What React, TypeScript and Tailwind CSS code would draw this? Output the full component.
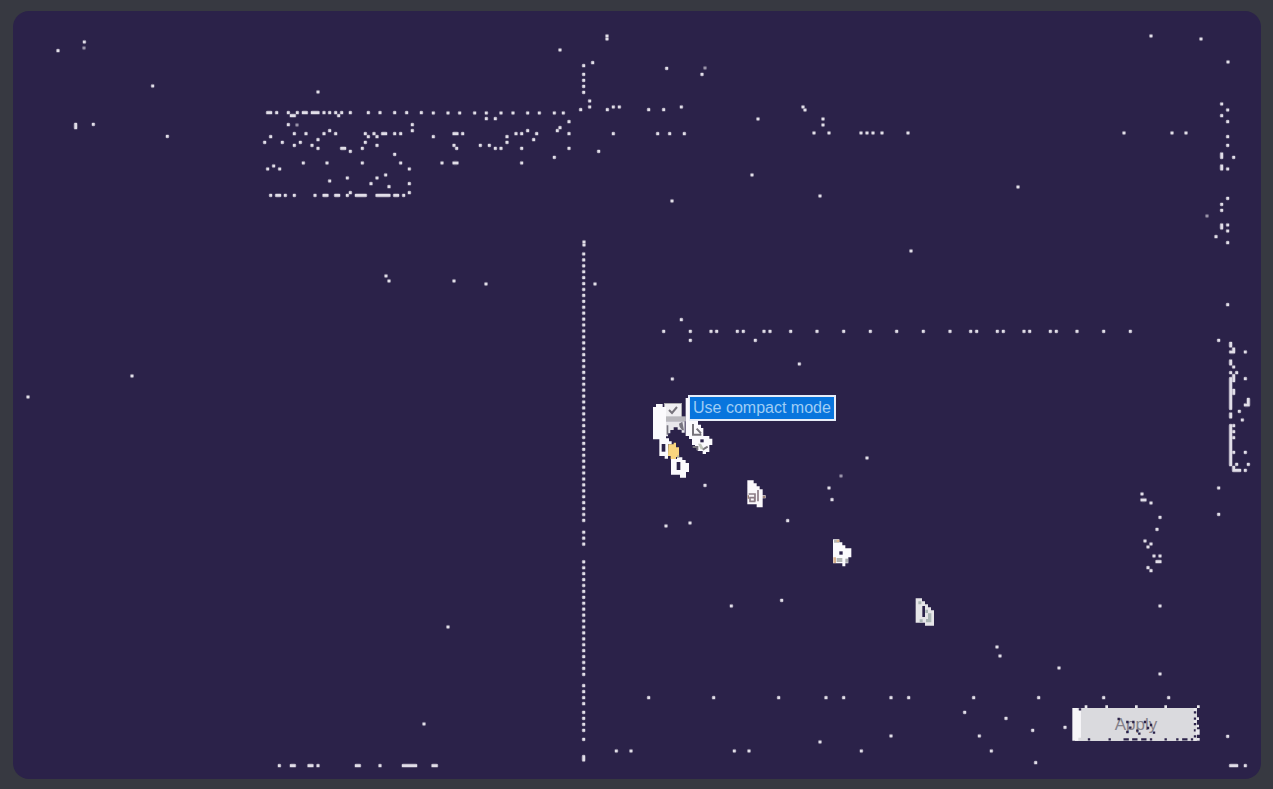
import React from "react";

type Mark = number | [number, number];
type Cluster = {
  x: number;
  y: number;
  rows: [number, ...Mark[]][];
  columns?: [number, number, number][];
};

// Marks are stored in thirds of a pixel, relative to each cluster's origin.
const clusters: Cluster[] = [
  {
    x: 250, y: 95,
    rows: [
      [53, [53, 62], 80, 115, 142, [160, 169], [187, 204], 222, 239, 257, 275, 301, 355, 390, 434, 470, 514],
      [62, [124, 133], 266],
      [89, 115, 487],
      [107, 239, 487],
      [116, 133, 168, 222, 257, 346, 372, [398, 407], 434, 452],
      [125, 62, 355, 381],
      [134, 204],
      [142, 44, 97, 151, 346],
      [151, 133, 186, 381],
      [160, 204, [275, 284], 337],
      [169, 301],
      [178, 434],
      [204, 160, 231, 337, 452],
      [213, 71],
      [222, 53, 89, 478],
      [240, 407],
      [249, 292, 381],
      [258, 239],
      [266, 363, 478],
      [275, 417],
      [293, 301, 478],
      [301, 62, [80, 89], 106, 133, 195, [222, 231], [257, 266], 292, [319, 346], [381, 417], [434, 443], 461],
    ],
  },
  {
    x: 420, y: 55,
    rows: [
      [23, 518], [32, 491], [58, 491, 846], [76, 491], [94, 491], [112, 491],
      [40, 740], [138, 509], [156, 509, 580, 598, 784], [164, 482, 562, 686, 731],
      [174, 40, 84, 119, 164, 199, 243, 279, 323, 358, 403, 430],
      [191, 199, 226], [200, 447], [218, 420], [227, 323, 412],
      [236, [102, 111], 128, 288, 305, 350, 447, 580, 713, 749, 793],
      [245, 40, 261], [254, 341], [262, 261], [271, 102, 181, 208],
      [280, 110, 226, 243, 305, 447], [289, 536], [307, 403],
      [324, 66, [102, 111], 305],
    ],
  },
  { x: 640, y: 370, rows: [[27, 97], [346, 195], [354, 567], [389, 576]] },
  { x: 730, y: 470, rows: [[152, 173], [391, 155], [408, 4]] },
  { x: 1050, y: 690, rows: [[23, 161, 356], [112, 45], [139, 533], [227, [542, 560], 586]] },
  {
    x: 1190, y: 90,
    rows: [
      [42, 95], [60, 113], [77, 95], [95, 113], [140, 113], [166, 113], [202, 131],
      [237, 113], [325, 113], [343, 95], [361, 95], [405, 113], [423, 113], [440, 78], [458, 113],
    ],
    columns: [[95, 192, 202], [95, 228, 237], [95, 405, 414]],
  },
  {
    x: 1190, y: 290,
    rows: [
      [44, 113], [151, 86], [186, 166, [122, 131]], [231, 131], [248, 122, 140], [266, 166],
      [345, [166, 175]], [364, 148], [390, 157], [407, 131], [425, 131], [443, 131],
      [487, 131, 166], [523, 140, 175], [541, [131, 149], 166], [594, 86], [673, 86],
    ],
    columns: [
      [122, 160, 168], [131, 177, 186], [122, 213, 222], [122, 266, 355], [131, 257, 272],
      [131, 301, 310], [175, 328, 345], [122, 372, 381], [122, 407, 524], [131, 532, 541],
    ],
  },
  {
    x: 0, y: 0,
    rows: [[126, 253], [152, 174], [258, 458], [373, 280], [409, 502]],
    columns: [[227, 373, 383]],
  },
  {
    x: 1100, y: 480,
    rows: [
      [42, 126], [60, [126, 135]], [69, 153], [112, 180], [148, 171], [183, 135], [192, 153],
      [201, 144], [228, 162, 180], [245, [171, 180]], [263, 144], [272, 153], [378, 180], [582, 180],
    ],
  },
  {
    x: 560, y: 680,
    rows: [
      [17, 71], [35, 71],
      [53, 71, 266, 461, 656, 798, 851, 993, 1046, 1241, 1436],
      [71, 71], [97, 71, 1214], [115, 71, 1338], [133, 71], [151, 71, 1418],
      [168, 993, 1258], [178, 71], [186, 780], [213, 169, 213, 523, 567, 904, 1294], [248, 1427],
    ],
    columns: [[71, 230, 240]],
  },
  { x: 260, y: 740, rows: [[77, 58, [94, 103], [147, 156], 174, [289, 298], 360, [430, 467], [519, 529]]] },
  {
    x: 640, y: 310,
    rows: [
      [29, 124],
      [64, 71, 151, 213, 230, 292, 310, 372, 390, 452, 531, 611, 691, 770, 850, 930, 992, 1010, 1072, 1090, 1152, 1169, 1231, 1249, 1311, 1391, 1471],
      [91, 151, 346], [162, 478],
    ],
  },
];

// Isolated specks, in whole pixels.
const specks: [number, number][] = [
  [560, 50], [607, 36], [607, 39], [1151, 36], [1201, 39], [1228, 62], [318, 92], [803, 107],
  [805, 110], [758, 119], [823, 119], [823, 125], [814, 133], [829, 133], [861, 133], [867, 133],
  [873, 133], [882, 133], [908, 133], [1124, 133], [1172, 133], [1186, 133], [752, 175],
  [1018, 187], [820, 196], [672, 201], [911, 251], [595, 284], [386, 276], [389, 281], [454, 281],
  [486, 284], [132, 376], [28, 397], [867, 458], [666, 526], [690, 523], [448, 627],
  [424, 724], [997, 647], [1000, 656], [1059, 668], [584, 242], [584, 245],
];
const dim: [number, number][] = [[84, 48], [297, 125], [705, 68], [841, 476], [1207, 216]];

function clusterPath(c: Cluster) {
  const rows = c.rows.map(([y, ...marks]) =>
    marks
      .map((m) => (Array.isArray(m) ? `M${m[0]} ${y}H${m[1]}` : `M${m} ${y}h.01`))
      .join("")
  );
  const cols = (c.columns ?? []).map(([x, a, b]) => `M${x} ${a}V${b}`);
  return rows.concat(cols).join("");
}

function dotPath(points: [number, number][]) {
  return points.map(([x, y]) => `M${x * 3} ${y * 3}h.01`).join("");
}

function seamPath() {
  const points: [number, number][] = [];
  for (let i = 0; i < 72; i++) {
    const y = 254 + i * 5.92;
    if ((y > 524 && y < 530) || (y > 546 && y < 557)) continue;
    if (y > 681) break;
    points.push([583.7, y]);
  }
  return dotPath(points);
}

function Marks({ d, tone = "#eeebf4" }: { d: string; tone?: string }) {
  return (
    <g fill="none" stroke={tone} strokeLinecap="square">
      <path d={d} strokeWidth="13" opacity=".32" strokeLinecap="round" />
      <path d={d} strokeWidth="8" opacity=".9" />
    </g>
  );
}

function Speckles() {
  return (
    <svg
      className="pointer-events-none absolute top-0 left-0 h-full w-full"
      viewBox="13 11 1248 768"
      preserveAspectRatio="xMinYMin meet"
      aria-hidden="true"
    >
      {clusters.map((c, i) => (
        <g key={i} transform={`translate(${c.x} ${c.y}) scale(${1 / 3})`}>
          <Marks d={clusterPath(c)} />
        </g>
      ))}
      <g transform={`scale(${1 / 3})`}>
        <Marks d={dotPath(specks)} />
        <Marks d={seamPath()} />
        <Marks d={dotPath(dim)} tone="#a29cb0" />
      </g>

      {/* pointer trail beside the option */}
      <g transform={`translate(640 370) scale(${1 / 3})`}>
        <path fill="#fbfafd" d="M39 111H48V102H68V111H78V205H87V214H95V223H84V266H74V258H58V208H39Z" />
        <path fill="#2b2249" d="M65 222H76V245H65Z" />
        <path fill="#f8d57e" d="M85 223H101V218H108V232H117V261H108V268H92V258H84Z" />
        <path fill="#fbfafd" d="M93 267H111V262H127V270H137V279H147V306H138V323H120V314H93Z" />
        <path fill="#2b2249" d="M110 276H121V300H110Z" />
        <path fill="#b9b8bd" d="M78 139H137V154H78Z" />
        <path fill="#e8e7ec" d="M78 154H134V188H125V179H113V172H101V180H91V190H84V199H78Z" />
        <path fill="#777580" d="M80 166h5v28h-5ZM117 161l10 -6 5 26h-5l-8-10Z" />
        <path fill="#fbfafd" d="M137 84H147V153H174V164H183V174H190V198H208V206H217V225H208V246H198V252H188V243H173V234H165V225H156V207H147V198H137Z" />
        <path fill="none" stroke="#77747b" strokeWidth="6" d="M159 162V194H184M170 176l13 14M158 231h14v10M188 239l15-9" />
        <path fill="#2b2249" d="M181 208h10v9h-10Z" />
        <path fill="#a5ad9b" d="M174 221h9l9 17h-10ZM111 256h7v8h-7Z" opacity=".7" />
      </g>

      <g transform={`translate(730 470) scale(${1 / 3})`}>
        <path fill="#fbf8fb" d="M52 31H71V40H80V49H89V58H98V76H107V85H98V112H80V103H52Z" />
        <path fill="none" stroke="#8c7c86" strokeWidth="5" d="M56 72H75V94M60 83h14v11H60ZM84 60V94" />
        <path fill="#9b8176" d="M98 77h8v7h-8ZM53 76h4v10h-4Z" />
        <path fill="#fbfafd" d="M309 208H328V217H337V226H346V235H364V262H355V280H346V289H337V280H309Z" />
        <path fill="#b2b5b4" d="M312 209h15v9h-15ZM320 264h17v12h-17Z" />
        <path fill="#dbb48f" d="M310 262h8v17h-8ZM320 209h8v7h-8Z" />
        <path fill="#a9abae" d="M346 266h8v12h-8Z" />
        <rect x="328" y="244" width="10" height="10" fill="#2b2249" />
        <path fill="#e6e5e8" d="M557 385H576V394H585V403H594V412H603V421H612V467H585V458H557Z" />
        <path fill="#2b2249" d="M577 408h8v33h-8Z" />
        <path fill="#aab5b4" d="M565 394h9v9h-9ZM586 419h8v10h-8ZM594 430h10v27H588v-10h6ZM569 448h9v9h-9Z" />
      </g>

      {/* worn edges and lettering of the Apply button */}
      <g transform={`translate(1050 690) scale(${1 / 3})`}>
        <path fill="#f6f5f8" d="M67 54H83V61H93V143H85V152H67Z" />
        <g fill="none" strokeWidth="9" strokeLinecap="square">
          <path
            stroke="#2b2249"
            strokeWidth="7"
            d="M90 58h.1M117 148h.1M179 148h.1M224 148h9M250 148h9M277 148h9M303 148h.1M347 148h.1M382 148h.1M400 148h9M426 148h.1M206 87h.1M232 96h.1M250 96h.1M241 113h.1M232 126h.1M262 122h.1M268 131h.1M285 96h.1M303 105h.1M312 128h.1M294 114h.1M435 67h.1M435 86h.1M435 102h.1M435 121h.1M435 139h.1"
          />
          <path
            stroke="#e9e8ed"
            strokeWidth="8"
            d="M108 50h.1M170 50h.1M259 50h.1M347 50h.1M445 50h.1M435 58h.1M443 86h.1M435 95h.1M443 108h.1M441 122h4v8h-4M435 148h.1M445 148h.1"
          />
        </g>
      </g>
    </svg>
  );
}

export default function App() {
  return (
    <div className="flex min-h-screen bg-[#373941] pt-[11px] pr-3 pb-[10px] pl-[13px] font-['Liberation_Sans',sans-serif]">
      <main className="relative flex flex-1 overflow-hidden rounded-2xl bg-[#2b2249]">
        <div className="w-[571px] shrink-0" />
        <form
          className="flex flex-1 flex-col justify-between pt-96 pr-16 pb-[38px] pl-20"
          onSubmit={(event) => event.preventDefault()}
        >
          <div className="flex items-start gap-1.5">
            <span className="grid pt-2">
              <input
                id="compact"
                type="checkbox"
                defaultChecked
                className="peer col-start-1 row-start-1 h-4 w-[18px] appearance-none border border-[#aaa8ae] bg-[#f0eff2]"
              />
              <svg
                className="pointer-events-none invisible col-start-1 row-start-1 h-4 w-[18px] peer-checked:visible"
                viewBox="0 0 18 16"
                aria-hidden="true"
              >
                <path d="M5 7l3 3 5-6" fill="none" stroke="#77747c" strokeWidth="2" />
              </svg>
            </span>
            <label
              htmlFor="compact"
              className="border-2 border-[#e7edf8] bg-[#0875dd] px-[3px] text-[16px] leading-[22px] whitespace-nowrap text-[#9fcdf5]"
            >
              Use compact mode
            </label>
          </div>
          <button
            type="submit"
            className="h-[33px] w-[122px] self-end bg-[#dadade] text-[17px] leading-8 text-[#85818a]"
          >
            Apply
          </button>
        </form>
        <Speckles />
      </main>
    </div>
  );
}
